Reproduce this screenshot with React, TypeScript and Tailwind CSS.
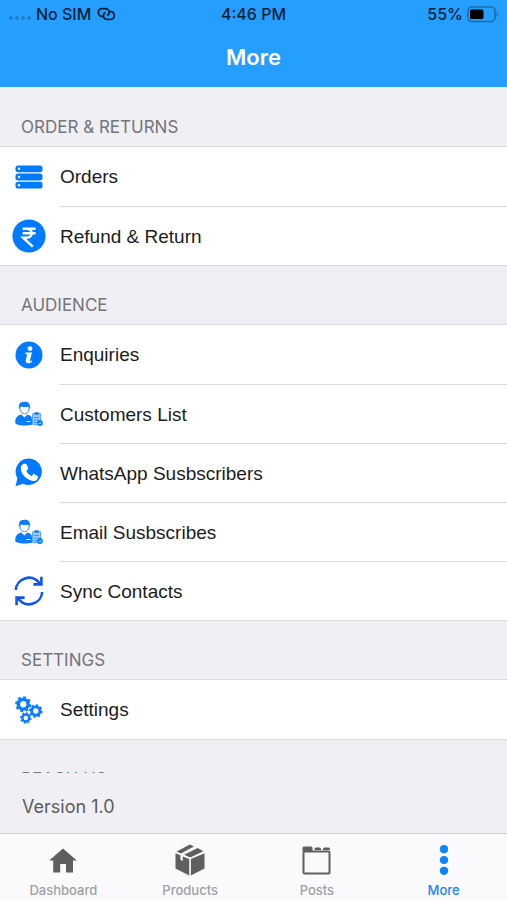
import React, { useState } from "react";

const OrdersIcon = () => (
  <svg width="28" height="24" viewBox="0 0 28 24" fill="#007aff">
    {[0.4, 8.6, 16.8].map((y) => (
      <g key={y}>
        <rect x="0.5" y={y} width="27" height="6.8" rx="2.6" />
        <circle cx="4" cy={y + 3.4} r="1.2" fill="#fff" />
      </g>
    ))}
  </svg>
);

const RupeeIcon = () => (
  <svg width="34" height="34" viewBox="0 0 34 34">
    <circle cx="17" cy="17" r="16.6" fill="#007aff" />
    <path
      d="M10.6 9.8H23.6M10.6 14.2H23.6M10.6 9.8H14.5C21.4 9.8 21.4 18.8 14.5 18.8H11.2L20.8 27.6"
      fill="none"
      stroke="#fff"
      strokeWidth="2.5"
    />
  </svg>
);

const InfoIcon = () => (
  <svg width="28" height="28" viewBox="0 0 28 28">
    <circle cx="14" cy="14" r="13.5" fill="#007aff" />
    <circle cx="15" cy="7.6" r="2.4" fill="#fff" />
    <path
      d="M10.6 11.4H17L15 19.2C14.8 20.2 15.6 20.1 17 19.3L16.6 21.2C13.4 23 10 22.4 10.8 19.2L12.2 13.2H10.2Z"
      fill="#fff"
    />
  </svg>
);

const CustomerIcon = () => (
  <svg width="28" height="25" viewBox="0 0 28 25" fill="#0a7cff">
    <path d="M0.3 20.5C0.3 16.5 3 14.4 6.4 13.6L9.5 16.5L12.2 13.6C15.6 14.3 17 15.6 17 18.5V23.8C12 25 4 25 0.3 22.5Z" />
    <path
      d="M5 7.5C5 14.5 14 14.5 14 7.5V5H5Z"
      fill="#fff"
      stroke="#3a96ff"
      strokeWidth="1"
    />
    <path d="M4 8.4C3.2 3.2 5 0.8 8.5 1C13.4 -0.4 15.8 3 15 8.4L13.8 5.6C10.5 6.6 7.5 5.8 5.5 5.2Z" />
    <rect x="17.5" y="12.5" width="8.2" height="11.2" rx="0.8" fill="#9ccbff" stroke="#4da1ff" strokeWidth="1" />
    <rect x="19.5" y="11.3" width="4.2" height="2.4" rx="0.6" />
    <path d="M19 16.5H24M19 19H24M19 21.5H22" stroke="#3a96ff" strokeWidth="1" />
    <path d="M11.5 20.5H15.5" stroke="#fff" strokeWidth="1" />
    <circle cx="25" cy="22" r="2.9" />
    <path d="M23.7 22L24.7 23L26.4 21.2" fill="none" stroke="#fff" strokeWidth="0.8" />
  </svg>
);

const WhatsAppIcon = () => (
  <svg width="28" height="29" viewBox="0 0 28 29">
    <path
      d="M14.3 0.5A13.2 13.2 0 1 1 8.2 25.7L0.5 28.3L2.4 20.2A13.2 13.2 0 0 1 14.3 0.5Z"
      fill="#007aff"
    />
    <path
      d="M9.3 5.4L11.6 6.2L13.4 10.6L11.4 12.8C12.4 15.4 14 16.8 16.6 18L18.6 15.8L23 18.2C23.2 21.6 20.6 23.4 17.8 23C11.2 21.8 6.4 16.6 5.8 10.8C5.6 8.2 7 6 9.3 5.4Z"
      fill="#fff"
    />
  </svg>
);

const SyncIcon = () => (
  <svg width="30" height="32" viewBox="0 0 30 32" fill="none" stroke="#0f57ec" strokeWidth="2.6">
    <path d="M1.8 15C2.4 3.8 17.5-2.6 25.8 8.6" />
    <path d="M28.2 17C27.6 28.2 12.5 34.6 4.2 23.4" />
    <path d="M27.4 1.8V9.4H19.4M2.6 30.2V22.6H10.6" />
  </svg>
);

const Gear = ({ cx, cy, r }: { cx: number; cy: number; r: number }) => (
  <g fill="none" stroke="#0a7cff">
    <circle cx={cx} cy={cy} r={r * 0.64} strokeWidth={r * 0.44} />
    <circle cx={cx} cy={cy} r={r * 0.92} strokeWidth={r * 0.28} pathLength={80} strokeDasharray="5.4 4.6" />
  </g>
);

const SettingsIcon = () => (
  <svg width="28" height="28" viewBox="0 0 28 28">
    <Gear cx={8.2} cy={8.2} r={7.6} />
    <Gear cx={20.8} cy={15} r={6.4} />
    <Gear cx={10.8} cy={22} r={5.4} />
  </svg>
);

const HomeIcon = () => (
  <svg width="28" height="25" viewBox="0 0 28 25" fill="#5f5f60">
    <path d="M14 0.5L27.8 12.4H24V24.5H17V16H11.2V24.5H4.2V12.4H0.2Z" />
  </svg>
);

const BoxIcon = () => (
  <svg width="30" height="32" viewBox="0 0 30 32" fill="#5f5f60">
    <path d="M0.5 9.2L5.4 11.3V15.8L7.8 17V12.4L14.2 15.1V31.5L0.5 24.6Z" />
    <path d="M15.9 15.1L29.5 9.2V24.6L15.9 31.5Z" />
    <path d="M1.6 7.4L14.8 0.4L19 2.4L5.8 9.4Z" />
    <path d="M9.2 10.8L22.6 4L28.4 7.2L15.2 13.4Z" />
  </svg>
);

const PostsIcon = () => (
  <svg width="29" height="29" viewBox="0 0 29 29" fill="#5f5f60">
    <path d="M0.5 5V2Q0.5 0.5 2 0.5H9Q10.5 0.5 10.5 2V5Z" />
    <path d="M12.5 4V3Q12.5 1.5 14 1.5H17.5Q19 1.5 19 3V4ZM21 4V3Q21 1.5 22.5 1.5H26.5Q28 1.5 28 3V4Z" />
    <rect x="1.5" y="5.5" width="26" height="22" rx="1" fill="none" stroke="#5f5f60" strokeWidth="2" />
  </svg>
);

const DotsIcon = () => (
  <svg width="10" height="30" viewBox="0 0 10 30" fill="#0a84ff">
    <circle cx="5" cy="4.2" r="4.1" />
    <circle cx="5" cy="15" r="4.1" />
    <circle cx="5" cy="25.8" r="4.1" />
  </svg>
);

const SECTIONS = [
  {
    title: "ORDER & RETURNS",
    items: [
      { name: "Orders", icon: <OrdersIcon /> },
      { name: "Refund & Return", icon: <RupeeIcon /> },
    ],
  },
  {
    title: "AUDIENCE",
    items: [
      { name: "Enquiries", icon: <InfoIcon /> },
      { name: "Customers List", icon: <CustomerIcon /> },
      { name: "WhatsApp Susbscribers", icon: <WhatsAppIcon /> },
      { name: "Email Susbscribes", icon: <CustomerIcon /> },
      { name: "Sync Contacts", icon: <SyncIcon /> },
    ],
  },
  {
    title: "SETTINGS",
    items: [{ name: "Settings", icon: <SettingsIcon /> }],
  },
  { title: "REACH US", items: [] },
];

const TABS = [
  { name: "Dashboard", icon: <HomeIcon /> },
  { name: "Products", icon: <BoxIcon /> },
  { name: "Posts", icon: <PostsIcon /> },
  { name: "More", icon: <DotsIcon /> },
];

const StatusBar = () => (
  <div className="grid h-7 grid-cols-3 items-center px-2 text-base font-medium text-[#0b2238]">
    <div className="flex items-center gap-1">
      <svg width="24" height="6" viewBox="0 0 24 6" className="mt-2" fill="#1f7fc8">
        {[3, 9, 15, 21].map((x) => (
          <circle key={x} cx={x} cy="3" r="2" />
        ))}
      </svg>
      <span className="whitespace-nowrap">No SIM</span>
      <svg width="22" height="14" viewBox="0 0 22 14" fill="none" stroke="#0b2238" strokeWidth="1.7">
        <path d="M8.2 9.4H6.4A4 4 0 0 1 6.4 1.6H10.4C14.6 1.6 15.6 7 12 8.6" />
        <path d="M14.6 4.6H16.2A4 4 0 0 1 16.2 12.4H12.2C8 12.4 7 7 10.6 5.4" />
      </svg>
    </div>
    <div className="text-center">4:46 PM</div>
    <div className="flex items-center justify-end gap-1">
      <span>55%</span>
      <svg width="32" height="17" viewBox="0 0 32 17">
        <rect x="1" y="1" width="27" height="14.5" rx="4" fill="none" stroke="#1a6cab" strokeWidth="1.6" />
        <rect x="3" y="3.5" width="13.5" height="9.5" rx="1.5" fill="#000" />
        <path d="M29.5 5.5Q32 8.2 29.5 11Z" fill="#1a6cab" />
      </svg>
    </div>
  </div>
);

const App: React.FC = () => {
  const [activeTab, setActiveTab] = useState("More");

  return (
    <div className="flex h-screen flex-col overflow-hidden bg-[#efeff4] font-['Inter',sans-serif]">
      <header className="shrink-0 bg-[#249fff]">
        <StatusBar />
        <h1 className="flex h-[59px] items-center justify-center text-[22px] font-semibold text-white">
          More
        </h1>
      </header>

      <main className="min-h-0 flex-1 overflow-hidden pt-px">
        {SECTIONS.map((section) => (
          <section key={section.title}>
            <h2 className="flex h-[58px] items-center px-[21px] pt-5 text-[17px] leading-5 text-[#75757a]">
              {section.title}
            </h2>
            {section.items.length > 0 && (
              <ul className="border-y border-[#d9d9de] bg-white">
                {section.items.map((item, index) => (
                  <li key={item.name}>
                    <button className="flex h-[59px] w-full items-center text-left">
                      <span className="flex w-[59px] shrink-0 justify-center pr-px">{item.icon}</span>
                      <span
                        className={`flex h-full flex-1 items-center pl-px pt-0.5 font-['Liberation_Sans',sans-serif] text-[19px] text-[#1c1c1c] ${
                          index > 0 ? "border-t border-[#dcdce0]" : ""
                        }`}
                      >
                        {item.name}
                      </span>
                    </button>
                  </li>
                ))}
              </ul>
            )}
          </section>
        ))}
      </main>

      <div className="flex h-[60px] shrink-0 items-center px-[22px] pt-2 text-lg text-[#5b5b5f]">
        Version 1.0
      </div>

      <nav className="grid shrink-0 grid-cols-4 border-t border-[#cfcfd4] bg-[#fafafc]">
        {TABS.map((tab) => (
          <button
            key={tab.name}
            onClick={() => setActiveTab(tab.name)}
            className={`flex flex-col items-center gap-0.5 pt-2 text-[13px] font-medium leading-5 ${
              activeTab === tab.name ? "text-[#1a85ff]" : "text-[#a0a0a3]"
            }`}
          >
            <span className="flex h-9 items-center">{tab.icon}</span>
            {tab.name}
          </button>
        ))}
      </nav>
    </div>
  );
};

export default App;
